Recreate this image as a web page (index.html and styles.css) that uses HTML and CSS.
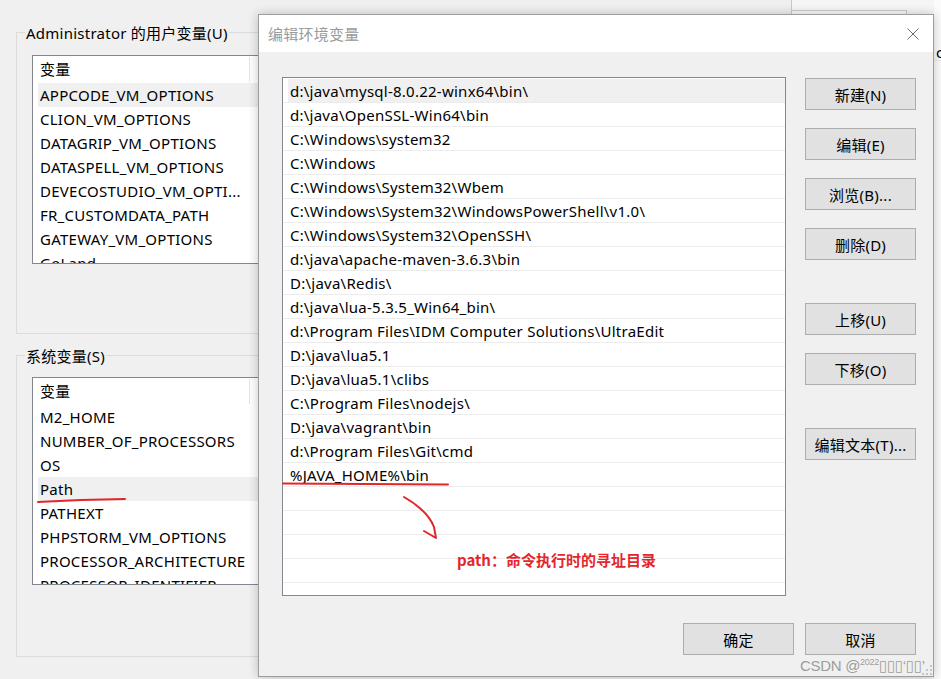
FILE: index.html
```html
<!DOCTYPE html>
<html lang="zh-CN">
<head>
<meta charset="utf-8">
<title>编辑环境变量</title>
<link rel="stylesheet" href="styles.css">
</head>
<body>
<div class="screen">
  <div class="bgwin">
    <section class="group g1">
      <div class="group-title">Administrator 的用户变量(U)</div>
      <div class="vlist l1">
        <div class="vhead"><span class="c1">变量</span></div>
        <div class="vrow sel"><span class="c1">APPCODE_VM_OPTIONS</span></div>
        <div class="vrow"><span class="c1">CLION_VM_OPTIONS</span></div>
        <div class="vrow"><span class="c1">DATAGRIP_VM_OPTIONS</span></div>
        <div class="vrow"><span class="c1">DATASPELL_VM_OPTIONS</span></div>
        <div class="vrow"><span class="c1">DEVECOSTUDIO_VM_OPTI...</span></div>
        <div class="vrow"><span class="c1">FR_CUSTOMDATA_PATH</span></div>
        <div class="vrow"><span class="c1">GATEWAY_VM_OPTIONS</span></div>
        <div class="vrow"><span class="c1">GoLand</span></div>
      </div>
    </section>
    <section class="group g2">
      <div class="group-title">系统变量(S)</div>
      <div class="vlist l2">
        <div class="vhead"><span class="c1">变量</span></div>
        <div class="vrow"><span class="c1">M2_HOME</span></div>
        <div class="vrow"><span class="c1">NUMBER_OF_PROCESSORS</span></div>
        <div class="vrow"><span class="c1">OS</span></div>
        <div class="vrow sel"><span class="c1">Path</span></div>
        <div class="vrow"><span class="c1">PATHEXT</span></div>
        <div class="vrow"><span class="c1">PHPSTORM_VM_OPTIONS</span></div>
        <div class="vrow"><span class="c1">PROCESSOR_ARCHITECTURE</span></div>
        <div class="vrow"><span class="c1">PROCESSOR_IDENTIFIER</span></div>
      </div>
    </section>
  </div>

  <div class="behind wb-a"></div>
  <div class="behind wb-b"></div>
  <div class="behind wb-c"><span class="wb-c-text">c</span></div>

  <div class="dialog">
    <div class="titlebar">
      <span class="title">编辑环境变量</span>
      <svg class="close" width="12" height="12" viewBox="0 0 12 12"><path d="M0.5 0.5 L11.5 11.5 M11.5 0.5 L0.5 11.5" stroke="#6f6f6f" stroke-width="1" fill="none"/></svg>
    </div>
    <div class="dbody">
      <div class="dmain">
        <div class="plist">
          <div class="prow sel">d:\java\mysql-8.0.22-winx64\bin\</div>
          <div class="prow">d:\java\OpenSSL-Win64\bin</div>
          <div class="prow">C:\Windows\system32</div>
          <div class="prow">C:\Windows</div>
          <div class="prow">C:\Windows\System32\Wbem</div>
          <div class="prow">C:\Windows\System32\WindowsPowerShell\v1.0\</div>
          <div class="prow">C:\Windows\System32\OpenSSH\</div>
          <div class="prow">d:\java\apache-maven-3.6.3\bin</div>
          <div class="prow">D:\java\Redis\</div>
          <div class="prow">d:\java\lua-5.3.5_Win64_bin\</div>
          <div class="prow">d:\Program Files\IDM Computer Solutions\UltraEdit</div>
          <div class="prow">D:\java\lua5.1</div>
          <div class="prow">D:\java\lua5.1\clibs</div>
          <div class="prow">C:\Program Files\nodejs\</div>
          <div class="prow">D:\java\vagrant\bin</div>
          <div class="prow">d:\Program Files\Git\cmd</div>
          <div class="prow">%JAVA_HOME%\bin</div>
          <div class="prow"></div>
          <div class="prow"></div>
          <div class="prow"></div>
          <div class="prow"></div>
          <div class="prow"></div>
        </div>
        <div class="btncol">
          <button class="btn">新建(N)</button>
          <button class="btn">编辑(E)</button>
          <button class="btn">浏览(B)...</button>
          <button class="btn">删除(D)</button>
          <button class="btn sep">上移(U)</button>
          <button class="btn">下移(O)</button>
          <button class="btn sep">编辑文本(T)...</button>
        </div>
      </div>
      <div class="dfoot">
        <button class="btn">确定</button>
        <button class="btn">取消</button>
      </div>
    </div>
    <svg class="grip" width="10" height="10" viewBox="0 0 10 10">
      <rect x="8" y="0" width="2" height="2" fill="#c4c4c4"/>
      <rect x="4" y="4" width="2" height="2" fill="#c4c4c4"/><rect x="8" y="4" width="2" height="2" fill="#c4c4c4"/>
      <rect x="0" y="8" width="2" height="2" fill="#c4c4c4"/><rect x="4" y="8" width="2" height="2" fill="#c4c4c4"/><rect x="8" y="8" width="2" height="2" fill="#c4c4c4"/>
    </svg>
  </div>

  <svg class="marks" width="941" height="679" viewBox="0 0 941 679">
    <path d="M38 502 Q80 499.5 125 499" stroke="#e3262c" stroke-width="2" fill="none" stroke-linecap="round"/>
    <path d="M283 483.5 L448 484.5" stroke="#e3262c" stroke-width="2" fill="none" stroke-linecap="round"/>
    <path d="M404 497 Q428 511 434 527 L436 538 L424 531" stroke="#e3262c" stroke-width="2" fill="none" stroke-linecap="round" stroke-linejoin="round"/>
  </svg>
  <div class="note">path：命令执行时的寻址目录</div>
  <div class="watermark">CSDN @<sup class="wm-sup">2022</sup>▯▯▯‘▯▯’</div>
</div>
</body>
</html>
```
FILE: styles.css
```css
* { box-sizing: border-box; }

body {
  margin: 0;
  background: #f0f0f0;
  font-family: "Noto Sans", "Noto Sans CJK SC", sans-serif;
  font-size: 15px;
  letter-spacing: 0.25px;
  color: #000;
}

.screen {
  position: relative;
  width: 941px;
  height: 679px;
  overflow: hidden;
  background: #f0f0f0;
}

/* background window */
.bgwin {
  padding: 32px 0 0 16px;
}

.group {
  width: 760px;
  height: 302px;
  border: 1px solid #dcdcdc;
}

.g2 { margin-top: 21px; }

.group-title {
  width: max-content;
  margin: -10px 0 0 8px;
  padding: 0 1px;
  line-height: 20px;
  background: #f0f0f0;
}

.vlist {
  width: 320px;
  margin-left: 15px;
  background: #fff;
  border: 1px solid #828790;
  overflow: hidden;
}

.l1 { margin-top: 12px; height: 209px; }
.l2 { margin-top: 11px; height: 208px; }

.vhead, .vrow {
  display: flex;
  white-space: nowrap;
  padding-left: 5px;
}

.vhead { height: 27px; line-height: 27px; }
.vrow { height: 24px; line-height: 25px; }

.vrow.sel {
  background: #f0f0f0;
  background-clip: content-box;
}

.c1 {
  flex: none;
  width: 212px;
  padding-left: 2px;
  overflow: hidden;
}

.vhead .c1 {
  border-right: 1px solid #e5e5e5;
  height: 25px;
  margin-top: 1px;
  line-height: 25px;
}

/* windows behind the dialog */
.behind { position: absolute; }

.wb-a {
  left: 791px;
  top: -2px;
  width: 150px;
  height: 40px;
  background: #f6f6f6;
  border-left: 1px solid #c9c9c9;
}

.wb-b {
  left: 792px;
  top: 10px;
  width: 115px;
  height: 30px;
  background: #fafafa;
  border-top: 1px solid #c9c9c9;
  border-right: 1px solid #c9c9c9;
}

.wb-c {
  left: 934px;
  top: 0;
  width: 20px;
  height: 679px;
  background: #fbfbfb;
}

.wb-c-text {
  display: block;
  margin-top: 42px;
  padding-left: 2px;
  line-height: 20px;
  height: 19px;
  border-bottom: 1px solid #ececec;
}

/* dialog */
.dialog {
  position: absolute;
  left: 258px;
  top: 14px;
  width: 676px;
  height: 663px;
  background: #f0f0f0;
  border: 1px solid #9d9d9d;
  box-shadow: 0 0 10px rgba(0, 0, 0, 0.22);
}

.titlebar {
  display: flex;
  align-items: center;
  justify-content: space-between;
  height: 37px;
  padding: 0 14px 0 9px;
  background: #fff;
}

.title {
  color: #9a9a9a;
  font-size: 15px;
}

.close { display: block; }

.dbody {
  padding: 25px 17px 21px 23px;
}

.dmain {
  display: flex;
  gap: 19px;
}

.plist {
  flex: none;
  width: 504px;
  height: 519px;
  padding-top: 1px;
  background: #fff;
  border: 1px solid #828790;
  overflow: hidden;
}

.prow {
  height: 24px;
  line-height: 24px;
  padding-left: 5px;
  text-indent: 2px;
  white-space: nowrap;
  border-bottom: 1px solid #ececec;
}

.prow.sel {
  background: #f0f0f0;
  background-clip: content-box;
}

.btncol {
  display: flex;
  flex-direction: column;
  gap: 18px;
  padding-top: 1px;
}

.btn {
  width: 111px;
  height: 32px;
  padding: 0;
  margin: 0;
  background: #e1e1e1;
  border: 1px solid #adadad;
  font-family: inherit;
  font-size: 15px;
  letter-spacing: inherit;
  color: #000;
}

.btncol .sep { margin-top: 25px; }

.dfoot {
  display: flex;
  justify-content: flex-end;
  gap: 11px;
  margin-top: 27px;
}

.grip {
  position: absolute;
  right: 1px;
  bottom: 1px;
}

/* annotations */
.marks {
  position: absolute;
  left: 0;
  top: 0;
  pointer-events: none;
}

.note {
  position: absolute;
  left: 457px;
  top: 550px;
  line-height: 20px;
  font-family: "Noto Sans CJK SC", sans-serif;
  font-weight: bold;
  font-size: 15px;
  letter-spacing: 0;
  color: #e3262c;
}

.watermark {
  position: absolute;
  left: 800px;
  top: 653px;
  font-family: "Liberation Sans", "DejaVu Sans", sans-serif;
  font-size: 15px;
  line-height: 18px;
  color: rgba(140, 140, 140, 0.85);
  letter-spacing: -0.3px;
  white-space: nowrap;
}

.wm-sup {
  font-size: 9px;
  vertical-align: 6px;
}
```
